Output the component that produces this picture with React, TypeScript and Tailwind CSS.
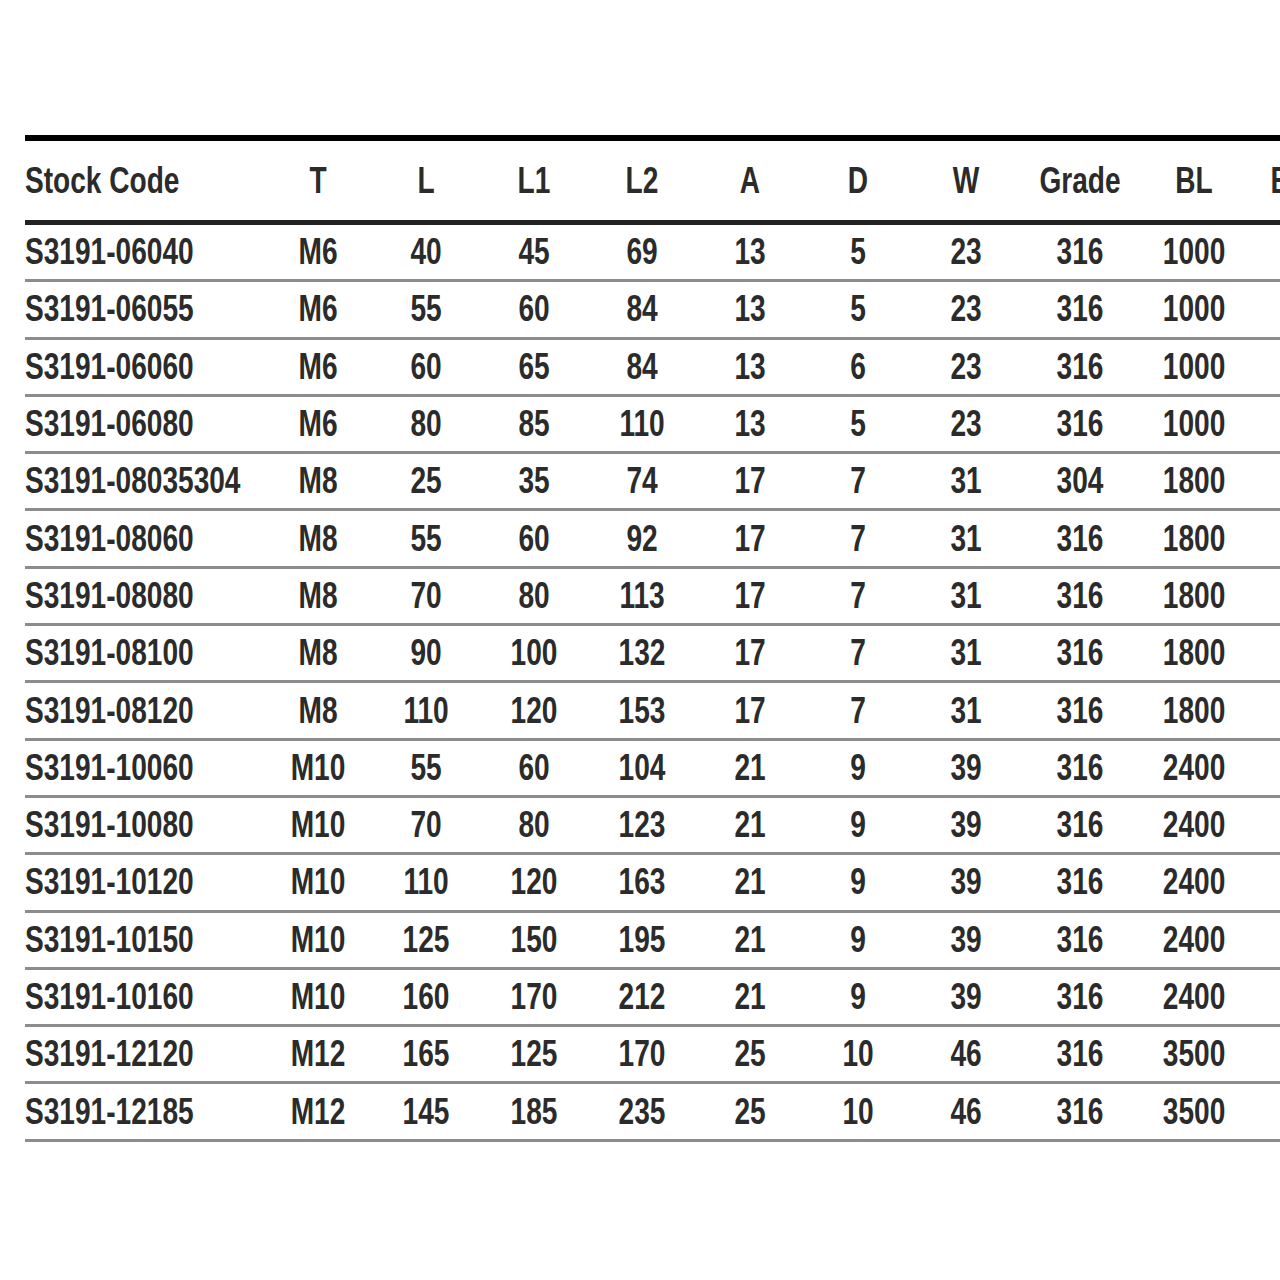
const headers = ["Stock Code", "T", "L", "L1", "L2", "A", "D", "W", "Grade", "BL", "BS"];

const rows: string[][] = [
  ["S3191-06040", "M6", "40", "45", "69", "13", "5", "23", "316", "1000", ""],
  ["S3191-06055", "M6", "55", "60", "84", "13", "5", "23", "316", "1000", ""],
  ["S3191-06060", "M6", "60", "65", "84", "13", "6", "23", "316", "1000", ""],
  ["S3191-06080", "M6", "80", "85", "110", "13", "5", "23", "316", "1000", ""],
  ["S3191-08035304", "M8", "25", "35", "74", "17", "7", "31", "304", "1800", ""],
  ["S3191-08060", "M8", "55", "60", "92", "17", "7", "31", "316", "1800", ""],
  ["S3191-08080", "M8", "70", "80", "113", "17", "7", "31", "316", "1800", ""],
  ["S3191-08100", "M8", "90", "100", "132", "17", "7", "31", "316", "1800", ""],
  ["S3191-08120", "M8", "110", "120", "153", "17", "7", "31", "316", "1800", ""],
  ["S3191-10060", "M10", "55", "60", "104", "21", "9", "39", "316", "2400", ""],
  ["S3191-10080", "M10", "70", "80", "123", "21", "9", "39", "316", "2400", ""],
  ["S3191-10120", "M10", "110", "120", "163", "21", "9", "39", "316", "2400", ""],
  ["S3191-10150", "M10", "125", "150", "195", "21", "9", "39", "316", "2400", ""],
  ["S3191-10160", "M10", "160", "170", "212", "21", "9", "39", "316", "2400", ""],
  ["S3191-12120", "M12", "165", "125", "170", "25", "10", "46", "316", "3500", ""],
  ["S3191-12185", "M12", "145", "185", "235", "25", "10", "46", "316", "3500", ""],
];

// fixed column widths, last column runs off the right edge like the source table
const cols = "grid grid-cols-[239px_108px_108px_108px_108px_108px_108px_108px_120px_108px_84px]";

function Cell({ value, first }: { value: string; first: boolean }) {
  return (
    <div className={first ? "flex items-center justify-start" : "flex items-center justify-center"}>
      <span className={first ? "inline-block scale-x-[0.78] origin-left whitespace-nowrap" : "inline-block scale-x-[0.78] origin-center whitespace-nowrap"}>
        {value}
      </span>
    </div>
  );
}

export default function App() {
  return (
    <main className="w-[1280px] h-[1280px] overflow-hidden bg-white pt-[135px] pl-[25px]">
      <div className="w-[1331px] text-[36px] leading-none font-bold text-[#2b2b2b] font-['Liberation_Sans',Arial,sans-serif]">
        <div className={`${cols} h-[90px] border-t-[6px] border-b-[5px] border-t-black border-b-[#222]`}>
          {headers.map((h, i) => (
            <Cell key={h} value={h} first={i === 0} />
          ))}
        </div>
        {rows.map((r) => (
          <div key={r[0]} className={`${cols} h-[57.3px] border-b-[3px] border-b-[#8c8c8c]`}>
            {r.map((v, i) => (
              <Cell key={i} value={v} first={i === 0} />
            ))}
          </div>
        ))}
      </div>
    </main>
  );
}
